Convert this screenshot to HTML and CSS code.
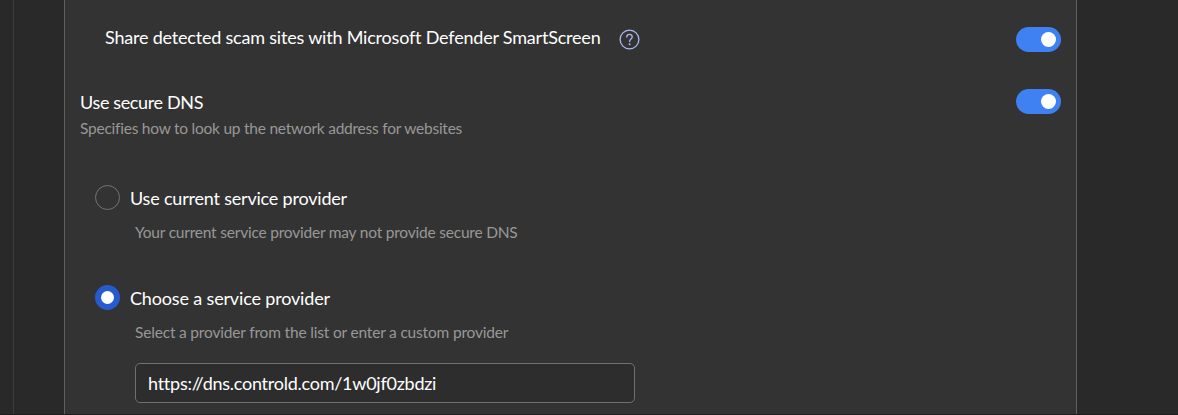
FILE: index.html
```html
<!DOCTYPE html>
<html lang="en">

<head>
    <meta charset="UTF-8">
    <meta name="viewport" content="width=device-width, initial-scale=1.0">
    <title>Settings</title>
    <link rel="stylesheet" href="styles.css">
</head>

<body>
    <div class="sidebar"></div>
    <main class="panel">
        <div class="row share">
            <span class="title share-title">Share detected scam sites with Microsoft Defender SmartScreen</span>
            <svg class="help" width="21" height="21" viewBox="0 0 21 21" fill="none">
                <circle cx="10.5" cy="10.5" r="9.4" stroke="#a9b9ee" stroke-width="1.3" />
                <path d="M7.8 8C7.8 6.5 8.9 5.4 10.5 5.4S13.2 6.5 13.2 7.9C13.2 9.9 10.6 10.2 10.6 12.6" stroke="#a9b9ee" stroke-width="1.3" stroke-linecap="round" />
                <circle cx="10.6" cy="15.3" r="1" fill="#a9b9ee" />
            </svg>
            <span class="toggle"></span>
        </div>

        <div class="row dns">
            <div class="dns-text">
                <div class="title dns-title">Use secure DNS</div>
                <div class="desc dns-desc">Specifies how to look up the network address for websites</div>
            </div>
            <span class="toggle"></span>
        </div>

        <!-- dns options -->
        <div class="option">
            <div class="option-head">
                <span class="radio"></span>
                <span class="title">Use current service provider</span>
            </div>
            <div class="desc">Your current service provider may not provide secure DNS</div>
        </div>
        <div class="option">
            <div class="option-head">
                <span class="radio checked"></span>
                <span class="title choose-title">Choose a service provider</span>
            </div>
            <div class="desc choose-desc">Select a provider from the list or enter a custom provider</div>
            <div class="field"><span class="title url">https://dns.controld.com/1w0jf0zbdzi</span></div>
        </div>
    </main>
</body>

</html>
```
FILE: styles.css
```css
* {
    box-sizing: border-box;
}

body {
    margin: 0;
    height: 415px;
    display: flex;
    overflow: hidden;
    background: #292929;
    border-bottom: 1px solid #1d1d1d;
    font-family: Lato, sans-serif;
}

.sidebar {
    width: 14px;
    border-right: 1px solid #3d3d3d;
}

.panel {
    width: 1013px;
    margin-left: 50px;
    padding: 25px 15px 0;
    background: #333333;
    border-left: 1px solid #5f5f5f;
    border-right: 1px solid #5f5f5f;
}

.row {
    display: flex;
}

.share {
    height: 62px;
    padding-left: 25px;
}

.dns {
    height: 86px;
}

.title {
    font-size: 18px;
    line-height: 24px;
    letter-spacing: -0.2px;
    color: #ffffff;
    white-space: nowrap;
}

.share-title {
    width: 495px;
}

.dns-title {
    letter-spacing: -0.36px;
}

.choose-title {
    letter-spacing: -0.16px;
}

.desc {
    font-size: 15.5px;
    line-height: 22px;
    letter-spacing: -0.21px;
    color: #989898;
    white-space: nowrap;
}

.dns-desc {
    padding-top: 3px;
    letter-spacing: -0.24px;
}

.choose-desc {
    letter-spacing: -0.18px;
}

.dns-text {
    padding-top: 3px;
}

.help {
    margin: 3.5px 0 0 19px;
}

.toggle {
    display: flex;
    align-items: center;
    justify-content: flex-end;
    width: 45px;
    height: 25px;
    margin: 2px 0 0 auto;
    padding-right: 5px;
    border-radius: 13px;
    background: #3f80f3;
}

.toggle::after {
    content: "";
    width: 15px;
    height: 15px;
    border-radius: 50%;
    background: #ffffff;
}

.option {
    height: 100px;
    padding: 12px 0 0 15px;
}

.option-head {
    display: flex;
    gap: 10px;
}

.option .title {
    padding-top: 1px;
}

.radio {
    display: flex;
    align-items: center;
    justify-content: center;
    width: 25px;
    height: 25px;
    border: 1px solid #737373;
    border-radius: 50%;
}

.radio.checked {
    border: 0;
    background: #265bd0;
}

.radio.checked::after {
    content: "";
    width: 13px;
    height: 13px;
    border-radius: 50%;
    background: #ffffff;
}

.option .desc {
    padding: 11px 0 0 40px;
}

.field {
    display: flex;
    width: 500px;
    height: 40px;
    margin: 20px 0 0 40px;
    padding: 6px 12px;
    border: 1px solid #707070;
    border-radius: 5px;
    background: #2d2d2d;
}

.url {
    letter-spacing: -0.25px;
}
```
